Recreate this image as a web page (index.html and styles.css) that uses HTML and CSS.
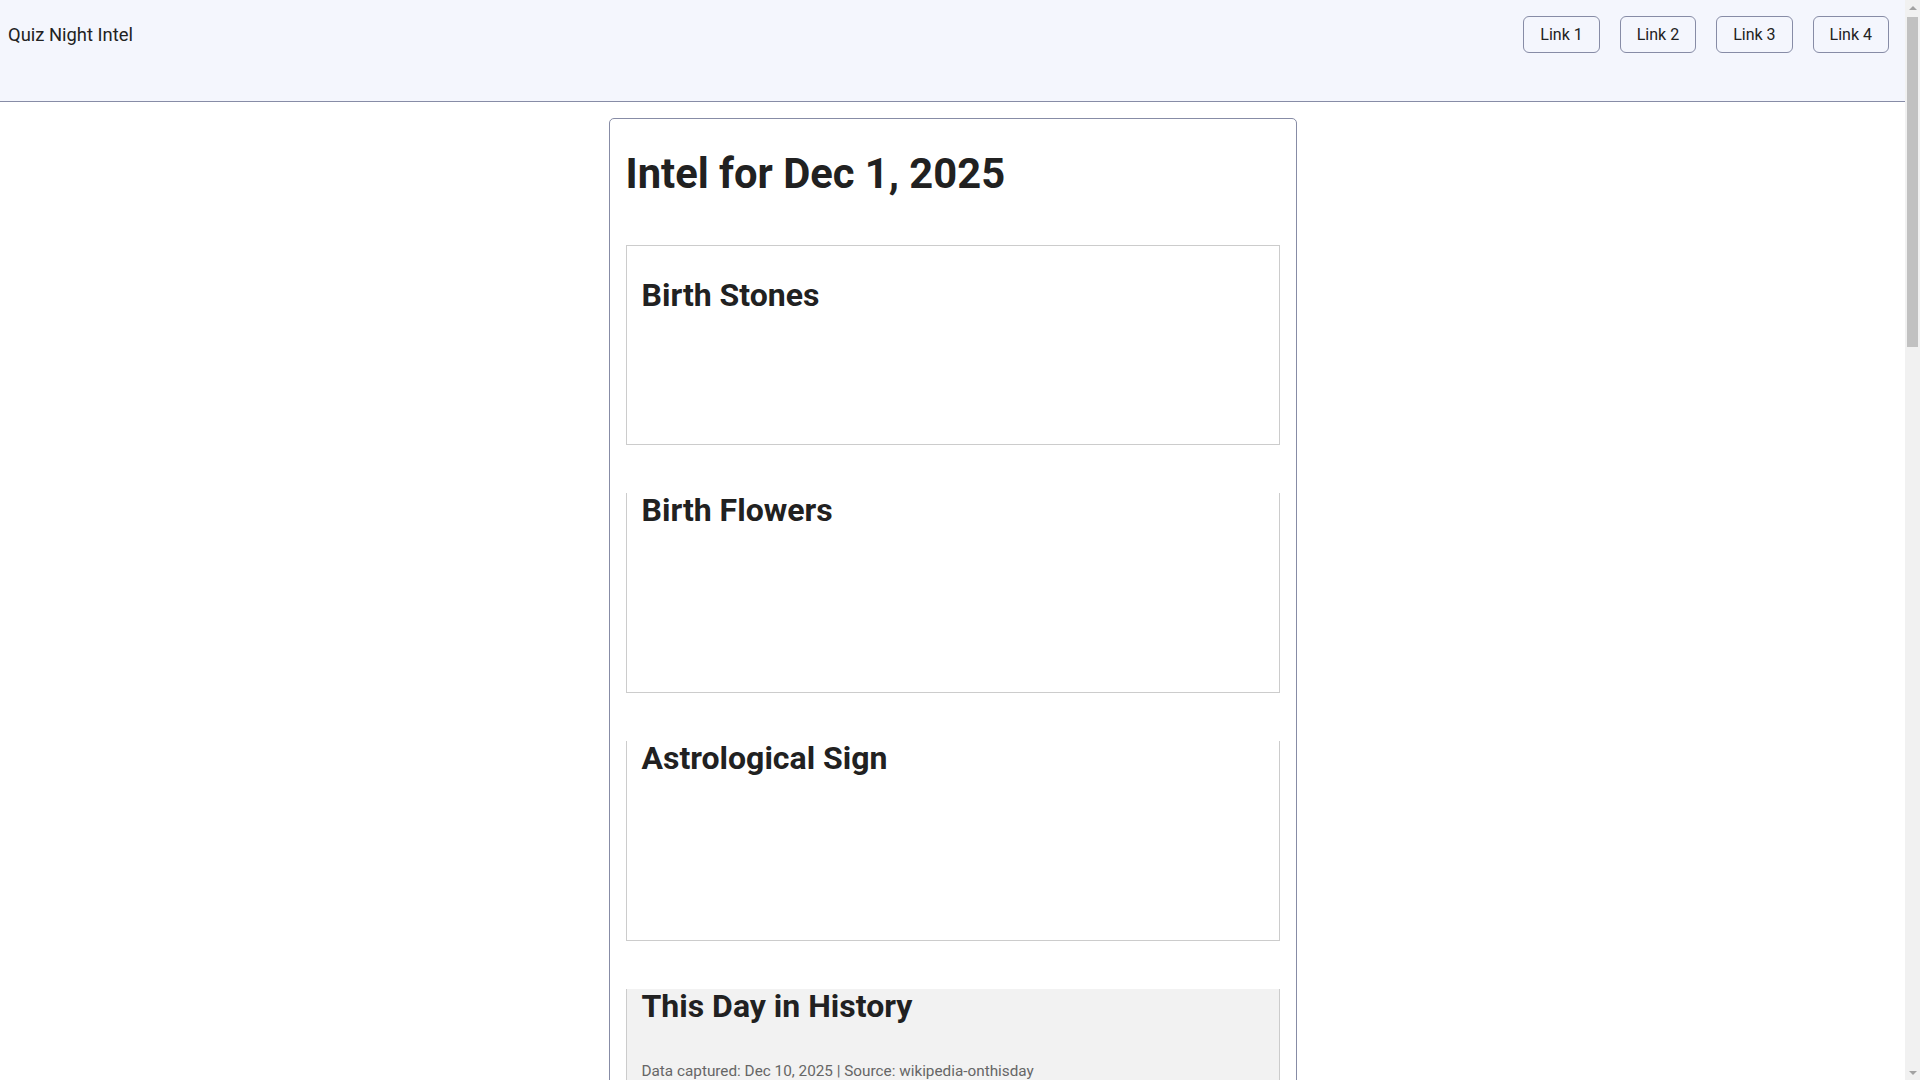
FILE: index.html
```html
<!DOCTYPE html>
<html lang="en">
<head>
<meta charset="utf-8">
<title>Quiz Night Intel</title>
<link rel="stylesheet" href="styles.css">
</head>
<body>
<div class="window">
  <div class="viewport">
    <header class="topbar">
      <div class="brand">Quiz Night Intel</div>
      <nav class="nav">
        <a class="nav-link" href="#">Link 1</a>
        <a class="nav-link" href="#">Link 2</a>
        <a class="nav-link" href="#">Link 3</a>
        <a class="nav-link" href="#">Link 4</a>
      </nav>
    </header>
    <main class="page">
      <article class="intel-card">
        <h1 class="intel-title">Intel for Dec 1, 2025</h1>
        <section class="panel panel-first">
          <h2 class="panel-title">Birth Stones</h2>
        </section>
        <section class="panel panel-clipped">
          <h2 class="panel-title">Birth Flowers</h2>
        </section>
        <section class="panel panel-clipped">
          <h2 class="panel-title">Astrological Sign</h2>
        </section>
        <section class="panel panel-clipped panel-history">
          <h2 class="panel-title">This Day in History</h2>
          <p class="meta">Data captured: Dec 10, 2025 | Source: wikipedia-onthisday</p>
        </section>
      </article>
    </main>
  </div>
  <div class="scrollbar" aria-hidden="true">
    <div class="sb-arrow"><span class="sb-tri sb-up"></span></div>
    <div class="sb-thumb"></div>
    <div class="sb-arrow sb-arrow-end"><span class="sb-tri sb-down"></span></div>
  </div>
</div>
</body>
</html>
```
FILE: styles.css
```css
html, body {
  margin: 0;
  padding: 0;
}

body {
  font-family: Roboto, "Noto Sans", "Liberation Sans", sans-serif;
  color: #212121;
  background: #ffffff;
}

.window {
  display: flex;
  height: 100vh;
  overflow: hidden;
}

.viewport {
  flex: 1;
  min-width: 0;
}

.topbar {
  box-sizing: content-box;
  height: 85px;
  padding: 16px 16px 0 8px;
  background: #f4f6fd;
  border-bottom: 1px solid #878ca6;
  display: flex;
  align-items: flex-start;
  justify-content: space-between;
}

.brand {
  font-size: 18.4px;
  line-height: 37px;
  color: #222222;
}

.nav {
  display: flex;
  gap: 20px;
}

.nav-link {
  font-size: 16px;
  line-height: 19px;
  padding: 8px 16px;
  color: #222222;
  text-decoration: none;
  border: 1px solid #878ca6;
  border-radius: 6px;
}

.page {
  padding: 16px 0 16px;
}

.intel-card {
  width: 688px;
  box-sizing: border-box;
  margin: 0 auto;
  padding: 16px;
  border: 1px solid #878ca6;
  border-radius: 5px;
}

.intel-title {
  font-size: 41.7px;
  font-weight: 700;
  margin: 14px 0 47px;
  color: #212121;
}

.panel {
  display: flow-root;
  height: 200px;
  box-sizing: border-box;
  padding: 0 15px;
  border: 1px solid #cccccc;
  margin-bottom: 48px;
}

.panel-title {
  font-size: 32px;
  font-weight: 700;
  margin: 0;
  color: #212121;
}

.panel-first .panel-title {
  margin-top: 30px;
}

.panel-clipped {
  border-top: 0;
}

.panel-clipped .panel-title {
  margin-top: -2px;
}

.panel-history {
  background: #f2f2f2;
  margin-bottom: 0;
}

.meta {
  font-size: 15.3px;
  color: #666666;
  margin: 37px 0 0;
}

.scrollbar {
  width: 15px;
  flex: none;
  background: #f1f1f1;
  display: flex;
  flex-direction: column;
}

.sb-arrow {
  height: 15px;
  display: flex;
  align-items: center;
  justify-content: center;
}

.sb-arrow-end {
  margin-top: auto;
}

.sb-tri {
  width: 0;
  height: 0;
  border-left: 4px solid transparent;
  border-right: 4px solid transparent;
}

.sb-up {
  border-bottom: 4px solid #a3a3a3;
}

.sb-down {
  border-top: 4px solid #a3a3a3;
}

.sb-thumb {
  height: 330px;
  margin: 2px 2px 0;
  background: #c1c1c1;
}
```
